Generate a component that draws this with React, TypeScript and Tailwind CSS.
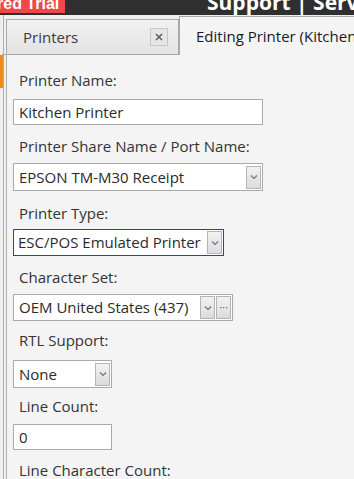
import React from "react";

const font = { fontFamily: '"Open Sans", "Noto Sans", sans-serif' };

function DropBtn({ dots = false }: { dots?: boolean }) {
  return (
    <div className="h-[23px] w-[15px] shrink-0 border border-[#b4b4b4] bg-gradient-to-b from-[#f2f2f2] to-[#dcdcdc] flex items-center justify-center">
      {dots ? (
        <span className="text-[11px] leading-none text-[#666] -mt-[3px]">···</span>
      ) : (
        <svg width="8" height="6" viewBox="0 0 8 6">
          <path d="M1 1.5 L4 4.5 L7 1.5" fill="none" stroke="#707070" strokeWidth="1.1" />
        </svg>
      )}
    </div>
  );
}

function Label({ text, cls }: { text: string; cls: string }) {
  return (
    <div className={`h-[20px] pl-[6px] text-[15px] leading-[20px] text-[#333] whitespace-nowrap ${cls}`}>{text}</div>
  );
}

export default function App() {
  return (
    <div className="w-[354px] h-[479px] overflow-hidden bg-[#efefef] flex flex-col" style={font}>
      {/* top bar */}
      <div className="h-[15px] shrink-0 bg-[#2f2f2f] flex items-end overflow-hidden">
        <div className="h-[13px] w-[65px] shrink-0 self-start bg-[#f04848] overflow-hidden flex items-end">
          <span className="text-[16px] font-bold text-white leading-none whitespace-nowrap -ml-[3px] mb-[1px]" style={{ fontFamily: '"Liberation Sans", Arial, sans-serif' }}>
            red Trial
          </span>
        </div>
        <div className="ml-[142px] leading-none text-[21px] font-bold text-white whitespace-nowrap mb-[2px]" style={{ fontFamily: '"Open Sans", sans-serif' }}>
          Support | Serv
        </div>
      </div>
      <div className="flex flex-1 min-h-0">
        {/* left strip */}
        <div className="w-[3px] shrink-0 flex flex-col">
          <div className="h-[40px]" />
          <div className="h-[33px] bg-[#f08a1c]" />
        </div>
        <div className="w-[1px] shrink-0 bg-[#b0b0b0]" />
        <div className="flex-1 flex flex-col min-w-0">
          {/* tabs */}
          <div className="h-[40px] shrink-0 flex">
            <div className="w-[4px] shrink-0 border-b border-[#aaa] ml-[-2px]" />
            <div className="w-[173px] mt-[4px] shrink-0 border border-[#aaa] bg-gradient-to-b from-[#f1f1f1] to-[#e3e3e3] flex items-center justify-between pl-[16px] pr-[10px]">
              <span className="text-[15px] text-[#3a3a3a] mt-[1px]">Printers</span>
              <div className="w-[18px] h-[18px] border border-[#c8c8c8] bg-[#e6e6e6] flex items-center justify-center">
                <svg width="8" height="8" viewBox="0 0 8 8">
                  <path d="M1 1 L7 7 M7 1 L1 7" stroke="#5a6068" strokeWidth="1.6" />
                </svg>
              </div>
            </div>
            <div className="flex-1 mt-[1px] border-t border-l border-[#a8a8a8] bg-[#f4f4f4] pl-[16px] pt-[8px] text-[15px] text-[#1a1a1a] whitespace-nowrap overflow-hidden">
              Editing Printer (Kitchen Printer)
            </div>
          </div>
          {/* panel */}
          <div className="flex-1 flex flex-col bg-[#f4f4f4] border-l border-[#b0b0b0] ml-[2px] pl-[6px]">
            <Label text="Printer Name:" cls="mt-[15px]" />
            <div className="mt-[9px] h-[26px] w-[250px] border border-[#a9a9a9] bg-white flex items-center pl-[5px] text-[15px] text-[#2a2a2a]">
              Kitchen Printer
            </div>

            <Label text="Printer Share Name / Port Name:" cls="mt-[11px]" />
            <div className="mt-[7px] h-[28px] w-[250px] border border-[#a9a9a9] bg-white flex items-center justify-between pl-[5px] pr-[1px] text-[15px] text-[#2a2a2a]">
              <span>EPSON TM-M30 Receipt</span>
              <DropBtn />
            </div>

            <Label text="Printer Type:" cls="mt-[12px]" />
            <div className="mt-[6px] h-[27px] w-[211px] border border-[#1d4b8f] bg-white flex items-center justify-between pl-[4px] pr-[1px] text-[15px] text-[#2a2a2a]">
              <span className="whitespace-nowrap">ESC/POS Emulated Printer</span>
              <DropBtn />
            </div>

            <Label text="Character Set:" cls="mt-[11px]" />
            <div className="mt-[7px] h-[27px] w-[220px] border border-[#a9a9a9] bg-white flex items-center pl-[5px] pr-[1px] text-[15px] text-[#2a2a2a]">
              <span className="flex-1 whitespace-nowrap">OEM United States (437)</span>
              <DropBtn />
              <div className="w-[1px]" />
              <DropBtn dots />
            </div>

            <Label text="RTL Support:" cls="mt-[9px]" />
            <div className="mt-[10px] h-[28px] w-[99px] border border-[#a9a9a9] bg-white flex items-center justify-between pl-[5px] pr-[1px] text-[15px] text-[#2a2a2a]">
              <span>None</span>
              <DropBtn />
            </div>

            <Label text="Line Count:" cls="mt-[8px]" />
            <div className="mt-[8px] h-[26px] w-[99px] border border-[#a9a9a9] bg-white flex items-center pl-[5px] text-[15px] text-[#2a2a2a]">
              0
            </div>

            <Label text="Line Character Count:" cls="mt-[10px]" />
          </div>
        </div>
      </div>
    </div>
  );
}
